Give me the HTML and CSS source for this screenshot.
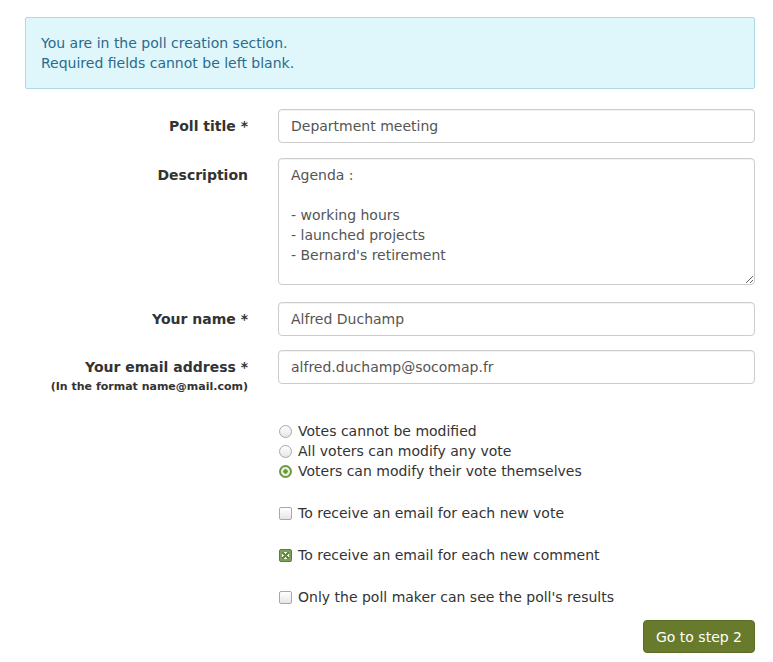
FILE: index.html
```html
<!DOCTYPE html>
<html lang="en">
<head>
    <meta charset="UTF-8">
    <title>Poll creation</title>
    <link rel="stylesheet" href="styles.css">
</head>
<body>
    <div class="page">
        <div class="alert">
            You are in the poll creation section.<br>
            Required fields cannot be left blank.
        </div>

        <form class="poll-form">
            <div class="form-group">
                <label class="field-label" for="title">Poll title *</label>
                <input class="field" id="title" type="text" value="Department meeting">
            </div>

            <div class="form-group">
                <label class="field-label" for="desc">Description</label>
                <textarea class="field area" id="desc">Agenda :

- working hours
- launched projects
- Bernard's retirement</textarea>
            </div>

            <div class="form-group">
                <label class="field-label" for="name">Your name *</label>
                <input class="field" id="name" type="text" value="Alfred Duchamp">
            </div>

            <div class="form-group">
                <label class="field-label" for="mail">Your email address *<small>(In the format name@mail.com)</small></label>
                <input class="field" id="mail" type="text" value="alfred.duchamp@socomap.fr">
            </div>

            <div class="options">
                <div class="radios">
                    <label class="opt"><input type="radio" name="edit"> Votes cannot be modified</label>
                    <label class="opt"><input type="radio" name="edit"> All voters can modify any vote</label>
                    <label class="opt"><input type="radio" name="edit" checked> Voters can modify their vote themselves</label>
                </div>
                <label class="opt check"><input type="checkbox"> To receive an email for each new vote</label>
                <label class="opt check"><input type="checkbox" checked> To receive an email for each new comment</label>
                <label class="opt check"><input type="checkbox"> Only the poll maker can see the poll's results</label>
            </div>

            <div class="actions">
                <button type="button" class="btn">Go to step 2</button>
            </div>
        </form>
    </div>
</body>
</html>
```

FILE: styles.css
```css
* {
    box-sizing: border-box;
}

body {
    margin: 0;
    background: #fff;
    color: #333;
    font-family: 'DejaVu Sans', 'Liberation Sans', sans-serif;
    font-size: 14px;
    line-height: 20px;
}

.page {
    width: 730px;
    margin: 17px 0 0 25px;
}

.alert {
    background: #dff7fb;
    border: 1px solid #aed9e3;
    border-radius: 2px;
    color: #2b6a8c;
    padding: 15px;
    margin-bottom: 20px;
}

.form-group {
    display: grid;
    grid-template-columns: 223px 1fr;
    column-gap: 30px;
    margin-bottom: 15px;
}

.form-group:nth-child(2) {
    margin-bottom: 17px;
}

.form-group:nth-child(3) {
    margin-bottom: 14px;
}

.field-label {
    font-weight: bold;
    text-align: right;
    padding-top: 7px;
}

.field-label small {
    display: block;
    font-size: 11px;
    line-height: 14px;
    margin-top: 3px;
}

.field {
    display: block;
    width: 100%;
    height: 34px;
    padding: 6px 12px;
    border: 1px solid #ccc;
    border-radius: 4px;
    font: inherit;
    color: #555;
    box-shadow: inset 0 1px 1px rgba(0,0,0,0.05);
}

.area {
    height: 127px;
    line-height: 20px;
    resize: vertical;
}

.options {
    margin-left: 253px;
    padding-top: 12px;
}

.opt {
    display: flex;
    align-items: center;
    gap: 6px;
}

.check {
    margin-top: 22px;
}

.opt input {
    -webkit-appearance: none;
    appearance: none;
    margin: 1px 0 0 1px;
    width: 13px;
    height: 13px;
    flex: none;
    border: 1px solid #a8a8a8;
    background: linear-gradient(#fff, #e6e6e6);
}

.opt input[type=radio] {
    border-radius: 50%;
}

.opt input[type=radio]:checked {
    border: 2px solid #6b9a40;
    background: radial-gradient(circle, #6b9a40 0 2px, #eaf3dc 2.5px);
}

.opt input[type=checkbox] {
    border-radius: 2px;
}

.opt input[type=checkbox]:checked {
    border-color: #5d7c3a;
    background: #7ea15a;
    position: relative;
}

.opt input[type=checkbox]:checked::after {
    content: "";
    position: absolute;
    left: 2px;
    top: 2px;
    width: 7px;
    height: 7px;
    background:
        linear-gradient(45deg, transparent 42%, #5d8a35 42% 58%, transparent 58%),
        linear-gradient(-45deg, transparent 42%, #5d8a35 42% 58%, transparent 58%),
        #f4f8ee;
}

.actions {
    display: flex;
    justify-content: flex-end;
    margin-top: 13px;
}

.btn {
    background: #687b2d;
    color: #fff;
    border: 1px solid #5b6d25;
    border-radius: 4px;
    font: inherit;
    padding: 6px 12px;
    height: 33px;
    cursor: pointer;
}
```
